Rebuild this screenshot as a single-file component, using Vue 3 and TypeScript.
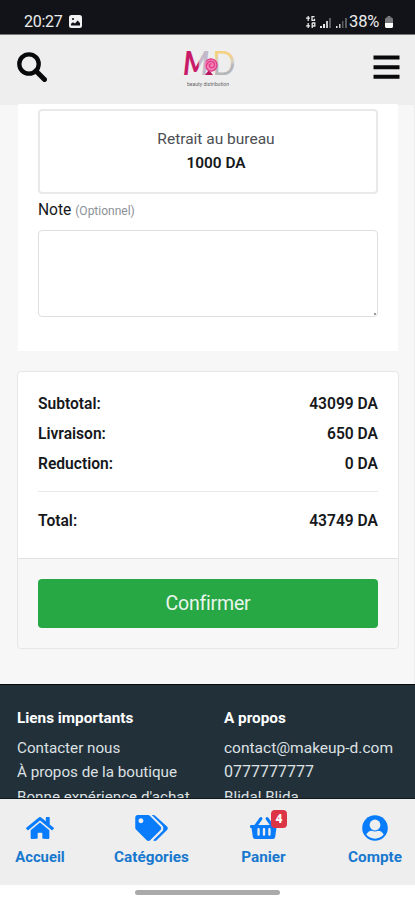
<script setup lang="ts">
import { ref } from 'vue'

interface Line {
  label: string
  amount: string
}

const lines: Line[] = [
  { label: 'Subtotal:', amount: '43099 DA' },
  { label: 'Livraison:', amount: '650 DA' },
  { label: 'Reduction:', amount: '0 DA' },
]
const note = ref('')
const links: string[] = ['Contacter nous', 'À propos de la boutique', "Bonne expérience d'achat"]
const cartCount = 4
</script>

<template>
  <div class="screen">
    <div class="status">
      <span class="clock">20:27</span>
      <svg class="picture" viewBox="0 0 13 13" width="13" height="13">
        <rect width="13" height="13" rx="2.5" fill="#f2f2f2" />
        <circle cx="4" cy="4" r="1.1" fill="#121318" />
        <path d="M2 10.5V8.7l2-1.4 2 1.3 2.6-3.1L11 8v2.5z" fill="#121318" />
      </svg>
      <svg class="signals" viewBox="0 0 44 14" width="44" height="14">
        <g stroke="#e8e8e8" stroke-width="1.3" fill="none">
          <path d="M3.200 1v5M1 3.200h4M3.200 8v5M1 10.800h4M9.500 1.600H7v3.700h2.500V3.700M7.200 13V7.800M7.200 8h2.600v3H7.200" />
        </g>
        <g fill="#e8e8e8">
          <path d="M15 11h2v2h-2zM18 9h2v4h-2zM31 11h1.500v2H31z" />
          <path d="M21 6h2v7h-2zM34 9h1.500v4H34z" opacity=".85" />
          <path d="M24 3h2v10h-2zM37 6h1.500v7H37zM40 3h2v10h-2z" opacity=".35" />
        </g>
      </svg>
      <span class="percent">38%</span>
      <svg class="battery" viewBox="0 0 8 12" width="8" height="12">
        <path d="M2.500 0h3v1.500H7L8 3v4H0V3l1-1.500h1.500z" fill="#77797d" />
        <path d="M0 7h8v4l-1 1H1l-1-1z" fill="#fff" />
      </svg>
    </div>

    <header class="header">
      <svg class="search" viewBox="0 0 30 30" width="30" height="30">
        <circle cx="12" cy="12" r="9.700" fill="none" stroke="#08090a" stroke-width="4.300" />
        <path d="M19 19l8.500 8.500" stroke="#08090a" stroke-width="5" stroke-linecap="round" />
      </svg>
      <svg class="logo" viewBox="0 0 54 40" width="54" height="40">
        <defs>
          <linearGradient id="dShade" x1="0" y1="0" x2="0" y2="1">
            <stop offset=".3" stop-color="#f4d080" />
            <stop offset=".48" stop-color="#d8d0c0" />
            <stop offset=".56" stop-color="#b7b7b9" />
          </linearGradient>
          <linearGradient id="mShade" x1="0" y1="0" x2="1" y2="0">
            <stop offset=".58" stop-color="#c71b68" />
            <stop offset=".64" stop-color="#c3b9cb" />
          </linearGradient>
        </defs>
        <text x="1" y="27" class="mark em" fill="url(#mShade)" textLength="26" lengthAdjust="spacingAndGlyphs">M</text>
        <text x="30.500" y="27" class="mark dee" fill="url(#dShade)" textLength="23" lengthAdjust="spacingAndGlyphs">D</text>
        <path d="M23 27l4-5 4 5z" fill="#b9155c" />
        <circle cx="29" cy="17" r="6.500" fill="#f47fb4" />
        <g fill="none" stroke="#de3a86" stroke-width="1.200" transform="translate(1.500 1)">
          <path d="M22.500 12.500c3-4 9-3 10.500 1s-1 9-6 8.500c-4-.5-5.500-5-3-8s7-1.500 7 1.500-3 4-4.500 2.500-.5-3.500 1.500-3" />
        </g>
        <text x="5" y="38" class="tag" textLength="42" lengthAdjust="spacingAndGlyphs">beauty distribution</text>
      </svg>
      <svg class="menu" viewBox="0 0 27 25" width="27" height="25">
        <path d="M.5 2.500h26M.5 12.300h26M.5 21.800h26" stroke="#08090a" stroke-width="4" />
      </svg>
    </header>

    <main class="content">
      <section class="delivery">
        <div class="option">
          <span class="option-name">Retrait au bureau</span>
          <strong>1000 DA</strong>
        </div>
        <label class="note-label" for="note">Note <small>(Optionnel)</small></label>
        <textarea id="note" v-model="note" class="note"></textarea>
      </section>

      <section class="summary">
        <div class="summary-body">
          <div v-for="line in lines" :key="line.label" class="row">
            <span>{{ line.label }}</span><span>{{ line.amount }}</span>
          </div>
          <div class="row total"><span>Total:</span><span>43749 DA</span></div>
        </div>
        <div class="summary-foot"><button class="confirm" type="button">Confirmer</button></div>
      </section>
    </main>

    <footer class="footer">
      <div class="col">
        <h4>Liens importants</h4>
        <span v-for="link in links" :key="link">{{ link }}</span>
      </div>
      <div class="col">
        <h4>A propos</h4>
        <span class="mail">contact@makeup-d.com</span>
        <span class="phone">0777777777</span>
        <span>Blidal Blida</span>
      </div>
    </footer>

    <nav class="tabs">
      <a class="tab home">
        <svg viewBox="0 0 576 512" width="28" height="25" fill="currentColor"><path d="M280.400 148.300 96 300.100V464a16 16 0 0 0 16 16l112-.3a16 16 0 0 0 16-16V368a16 16 0 0 1 16-16h64a16 16 0 0 1 16 16v95.600a16 16 0 0 0 16 16.100l112 .3a16 16 0 0 0 16-16V300L295.700 148.300a12.200 12.200 0 0 0-15.300 0zM571.600 251.500 488 182.600V44.100a12 12 0 0 0-12-12h-56a12 12 0 0 0-12 12v72.600L318.500 43a48 48 0 0 0-61 0L4.300 251.500a12 12 0 0 0-1.600 16.900l25.500 31a12 12 0 0 0 16.900 1.600l235.300-193.700a12.200 12.200 0 0 1 15.300 0L530.900 301a12 12 0 0 0 16.900-1.600l25.500-31a12 12 0 0 0-1.700-16.900z" /></svg>
        <span>Accueil</span>
      </a>
      <a class="tab categories">
        <svg viewBox="0 0 640 512" width="33" height="26" fill="currentColor"><path d="M497.900 225.900 286.100 14.100A48 48 0 0 0 252.100 0H48C21.500 0 0 21.500 0 48v204.100a48 48 0 0 0 14.100 33.900l211.800 211.900c18.700 18.700 49.100 18.700 67.900 0l204.100-204.100c18.700-18.800 18.700-49.200 0-67.900zM112 160c-26.500 0-48-21.500-48-48s21.500-48 48-48 48 21.500 48 48-21.500 48-48 48zm513.900 133.800L421.800 497.900c-18.700 18.700-49.100 18.700-67.900 0l-.4-.4 174.100-174.100c16-16 24.900-37.300 24.900-60s-8.800-44-24.900-60L324.200 0h33.900a48 48 0 0 1 33.900 14.100l233.900 211.800c18.700 18.800 18.700 49.200 0 67.900z" /></svg>
        <span>Catégories</span>
      </a>
      <a class="tab cart">
        <svg viewBox="0 0 576 512" width="28" height="25" fill="currentColor"><path d="M576 216v16a24 24 0 0 1-24 24h-8l-26.100 182.800A48 48 0 0 1 470.400 480H105.600a48 48 0 0 1-47.500-41.200L32 256h-8a24 24 0 0 1-24-24v-16a24 24 0 0 1 24-24h67.300l106.800-146.800c10.400-14.300 30.400-17.500 44.700-7.100s17.500 30.400 7.100 44.700L170.500 192h235.100L326.100 82.800c-10.400-14.300-7.200-34.300 7.100-44.700s34.300-7.200 44.700 7.100L484.700 192H552a24 24 0 0 1 24 24zM312 392V280a24 24 0 0 0-48 0v112a24 24 0 0 0 48 0zm112 0V280a24 24 0 0 0-48 0v112a24 24 0 0 0 48 0zm-224 0V280a24 24 0 0 0-48 0v112a24 24 0 0 0 48 0z" /></svg>
        <b class="badge">{{ cartCount }}</b>
        <span>Panier</span>
      </a>
      <a class="tab account">
        <svg viewBox="0 0 26 26" width="26" height="26"><circle cx="13" cy="13" r="12.800" fill="currentColor" /><circle cx="13" cy="10" r="5.400" fill="#eee" /><path d="M4.300 19.400c1.600-2.600 3.500-3.600 5.600-3.600 2 .9 4.200.9 6.200 0 2.100 0 4 1 5.600 3.600a11 11 0 0 1-17.400 0z" fill="#eee" /></svg>
        <span>Compte</span>
      </a>
    </nav>
    <div class="gesture"><i></i></div>
  </div>
</template>

<style>
body {
  margin: 0;
  overflow: hidden;
}
</style>

<style scoped>
* {
  box-sizing: border-box;
}
.screen {
  width: 415px;
  height: 900px;
  display: flex;
  flex-direction: column;
  overflow: hidden;
  background: #f7f7f7;
  color: #16181b;
  font-family: Roboto, "Noto Sans", sans-serif;
}
.status {
  height: 35px;
  flex: none;
  display: flex;
  align-items: center;
  padding: 9px 22px 0 24px;
  background: #121318;
  border-bottom: 1px solid #77797b;
  color: #ececec;
  font-size: 16px;
}
.clock {
  width: 45px;
  letter-spacing: -0.3px;
}
.signals {
  margin-left: auto;
}
.percent {
  width: 34px;
  font-size: 16.5px;
  letter-spacing: -0.1px;
}
.battery {
  margin-left: 2px;
}
.header {
  height: 70px;
  flex: none;
  display: grid;
  grid-template-columns: 1fr 54px 1fr;
  align-items: start;
  padding: 14px 15px 0 17px;
  background: #eee;
}
.search {
  margin-top: 3px;
}
.logo {
  margin-top: -1px;
}
.menu {
  justify-self: end;
  margin-top: 6px;
}
.mark {
  font-family: Lato, sans-serif;
  font-size: 32px;
}
.em {
  font-style: italic;
  font-weight: 700;
}
.tag {
  fill: #666;
  font-size: 5px;
}
.content {
  height: 579px;
  flex: none;
  padding: 0 15px 0 17px;
  border-right: 1px solid #ececec;
}
.delivery {
  height: 247px;
  display: flex;
  flex-direction: column;
  margin: -1px 1px 0 1px;
  padding: 5px 20px 0;
  background: #fff;
}
.option {
  height: 85px;
  display: flex;
  flex-direction: column;
  align-items: center;
  padding: 16px 0 0 16px;
  border: 2px solid #e8e9eb;
  border-radius: 4px;
  font-size: 16px;
  line-height: 24px;
}
.option-name {
  color: #4b4e52;
  font-size: 15.5px;
}
.option strong {
  font-size: 15.4px;
  font-weight: 600;
}
.note-label {
  height: 36px;
  padding-top: 4px;
  font-size: 15.6px;
  line-height: 24px;
}
.note-label small {
  color: #8b9197;
  font-size: 12px;
}
.note {
  height: 87px;
  border: 1px solid #dddfe2;
  border-radius: 4px;
  background: linear-gradient(#999, #999) right 1px bottom 1px / 2px 2px no-repeat #fff;
  outline: 0;
  resize: none;
}
.summary {
  height: 278px;
  margin-top: 20px;
  border: 1px solid #e6e6e6;
  border-radius: 4px;
}
.summary-body {
  height: 187px;
  padding: 17px 20px 0;
  background: #fff;
  border-bottom: 1px solid #e2e2e2;
  border-radius: 4px 4px 0 0;
}
.row {
  height: 30px;
  display: flex;
  align-items: center;
  justify-content: space-between;
  font-size: 15.6px;
  font-weight: 600;
}
.total {
  height: 59px;
  margin-top: 12px;
  border-top: 1px solid #e9e9e9;
}
.summary-foot {
  padding: 20px;
}
.confirm {
  width: 100%;
  height: 49px;
  border: 0;
  border-radius: 4px;
  background: #28a745;
  color: #e9f6ec;
  font: 400 19.5px Roboto, sans-serif;
  letter-spacing: -0.2px;
}
.footer {
  height: 115px;
  flex: none;
  display: grid;
  grid-template-columns: 207px 1fr;
  padding: 21px 0 0 17px;
  overflow: hidden;
  background: #22303a;
  border-top: 1px solid #07090b;
  border-bottom: 1px solid #11181d;
  color: #dde1e3;
  font-size: 15.2px;
}
.col {
  display: flex;
  flex-direction: column;
  line-height: 24.5px;
  white-space: nowrap;
}
.col h4 {
  margin: 0 0 5px;
  color: #fff;
  font-size: 15.3px;
  font-weight: 700;
}
.mail {
  font-size: 15.5px;
}
.phone {
  font-size: 16px;
}
.tabs {
  height: 86px;
  flex: none;
  display: grid;
  grid-template-columns: 80px 143px 81px 1fr;
  background: #eee;
  color: #087cfa;
}
.tab {
  position: relative;
  display: flex;
  flex-direction: column;
  align-items: center;
  padding-top: 16px;
  font-size: 15.3px;
  font-weight: 700;
}
.tab > svg {
  height: 26px;
}
.tab > span {
  margin-top: 4px;
  line-height: 24px;
  color: #1878ce;
}
.home {
  font-size: 14.8px;
}
.account {
  padding-left: 31px;
}
.badge {
  position: absolute;
  left: 48px;
  top: 11px;
  width: 16px;
  height: 18px;
  border-radius: 4px;
  background: #dc3545;
  color: #fff;
  font-size: 12px;
  line-height: 18px;
  text-align: center;
}
.gesture {
  height: 15px;
  flex: none;
  padding: 5px 0 0 135px;
  background: #fff;
}
.gesture i {
  display: block;
  width: 145px;
  height: 5px;
  border-radius: 3px;
  background: #aaa;
}
</style>
